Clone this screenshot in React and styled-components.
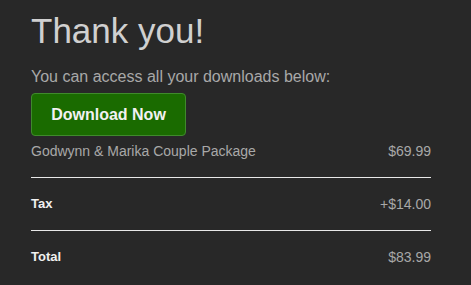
import React from "react";
import styled, { createGlobalStyle } from "styled-components";

const GlobalStyle = createGlobalStyle`
  html, body {
    margin: 0;
    padding: 0;
    background: #282828;
  }
  body {
    font-family: "Liberation Sans", Arial, sans-serif;
  }
`;

const Page = styled.div`
  width: 471px;
  height: 285px;
  box-sizing: border-box;
  padding: 10px 40px 0 31px;
  background: #282828;
  overflow: hidden;
`;

const Title = styled.h1`
  margin: 0;
  font-size: 35px;
  font-weight: normal;
  color: #d0d0d0;
  line-height: 41px;
`;

const Lead = styled.p`
  margin: 17px 0 0;
  font-size: 16px;
  line-height: 18px;
  color: #a8a8a8;
`;

const DownloadButton = styled.button`
  margin-top: 7px;
  width: 155px;
  height: 43px;
  box-sizing: border-box;
  background: #1a6b00;
  border: 1px solid #3f8a2c;
  border-radius: 4px;
  color: #f2f2f2;
  font-family: inherit;
  font-size: 16px;
  font-weight: bold;
  cursor: pointer;
  display: block;
`;

const Summary = styled.div`
  display: flex;
  flex-direction: column;
`;

const Row = styled.div`
  display: flex;
  justify-content: space-between;
  align-items: center;
  padding: ${(p) => (p.$first ? "7px 0 18px" : "18px 0")};
  border-bottom: ${(p) => (p.$last ? "none" : "1px solid #e8e8e8")};
  line-height: 16px;
`;

const Label = styled.span`
  font-size: ${(p) => (p.$bold ? "13px" : "14px")};
  font-weight: ${(p) => (p.$bold ? "bold" : "normal")};
  color: ${(p) => (p.$bold ? "#f0f0f0" : "#a8a8a8")};
`;

const Price = styled.span`
  font-size: 14px;
  color: #a8a8a8;
`;

const rows = [
  { label: "Godwynn & Marika Couple Package", price: "$69.99" },
  { label: "Tax", price: "+$14.00", bold: true },
  { label: "Total", price: "$83.99", bold: true },
];

export default function App() {
  return (
    <>
      <GlobalStyle />
      <Page>
        <Title>Thank you!</Title>
        <Lead>You can access all your downloads below:</Lead>
        <DownloadButton>Download Now</DownloadButton>
        <Summary>
          {rows.map((r, i) => (
            <Row key={r.label} $first={i === 0} $last={i === rows.length - 1}>
              <Label $bold={r.bold}>{r.label}</Label>
              <Price>{r.price}</Price>
            </Row>
          ))}
        </Summary>
      </Page>
    </>
  );
}
